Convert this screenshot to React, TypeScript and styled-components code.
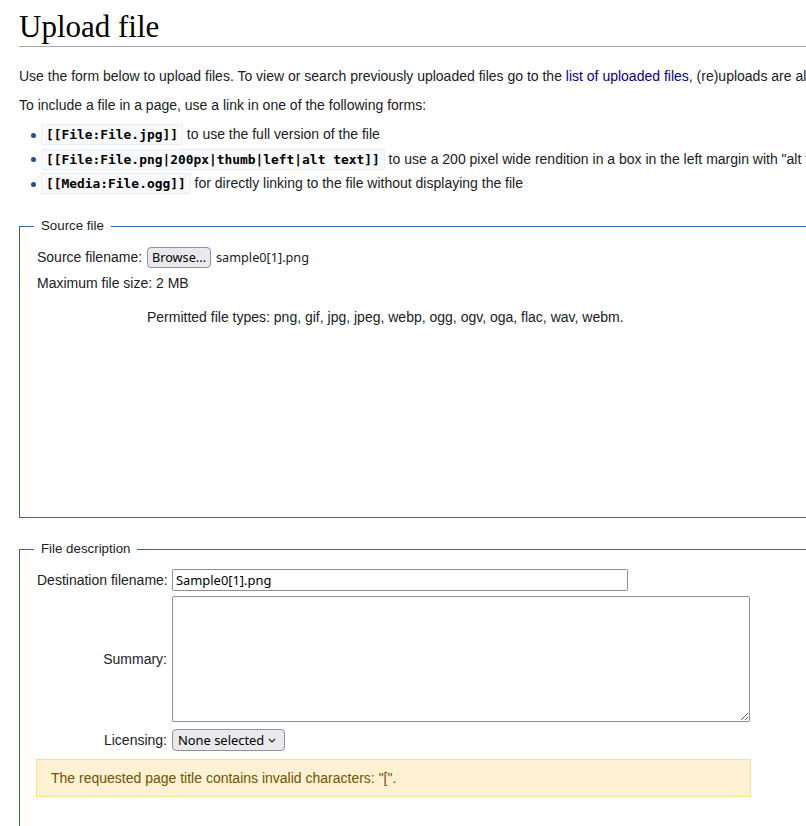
import React from "react";
import styled, { createGlobalStyle } from "styled-components";

const GlobalStyle = createGlobalStyle`
  html, body {
    margin: 0;
    overflow: hidden;
    background: #ffffff;
  }
  body {
    font-family: "Liberation Sans", Arial, sans-serif;
    font-size: 14px;
    color: #202122;
  }
`;

const Page = styled.main`
  width: 1400px;
  padding-left: 19px;
`;

const Title = styled.h1`
  margin: 7px 0 18px;
  font-family: "Liberation Serif", "Times New Roman", serif;
  font-size: 31px;
  font-weight: normal;
  line-height: 39px;
  color: #000;
  border-bottom: 1px solid #a2a9b1;
`;

const Para = styled.p`
  margin: 0 0 7px;
  line-height: 22px;
  white-space: nowrap;
`;

const Link = styled.a`
  color: #0b0080;
  text-decoration: none;
`;

const Usage = styled.ul`
  margin: 0;
  padding: 0 0 0 22px;
  list-style: none;
`;

const UsageItem = styled.li`
  height: 22px;
  line-height: 22px;
  margin-bottom: 2.5px;
  white-space: nowrap;
  &::before {
    content: "";
    display: inline-block;
    width: 5px;
    height: 5px;
    margin: 0 5px 0 -10px;
    border-radius: 50%;
    background: #2a4b8d;
    vertical-align: middle;
  }
`;

const Code = styled.code`
  font-family: "DejaVu Sans Mono", monospace;
  font-size: 12.9px;
  font-weight: bold;
  line-height: 1;
  color: #000;
  background: #f8f9fa;
  border: 1px solid #eaecf0;
  border-radius: 2px;
  padding: 2px 4px;
`;

const Fieldset = styled.fieldset<{ $mt: number }>`
  margin: ${(p) => p.$mt}px 0 0;
  padding: 0 14px;
  border: 1px solid #3366aa;
  min-width: 0;
`;

const Legend = styled.legend`
  padding: 0 7px;
  font-size: 13.3px;
  line-height: 22px;
`;

const FormBody = styled.div<{ $minH?: number; $pb?: number }>`
  padding: 8px 0 ${(p) => p.$pb ?? 0}px 2px;
  min-height: ${(p) => p.$minH ?? 0}px;
  box-sizing: border-box;
`;

const FormRow = styled.div<{ $labelW: number; $mt?: number }>`
  display: grid;
  grid-template-columns: ${(p) => p.$labelW}px 1fr;
  column-gap: 5px;
  align-items: center;
  margin-top: ${(p) => p.$mt ?? 0}px;
  line-height: 22px;
  white-space: nowrap;
`;

const Label = styled.label`
  padding-left: 1px;
  text-align: right;
`;

const Plain = styled.div<{ $mt?: number }>`
  margin-top: ${(p) => p.$mt ?? 0}px;
  padding-left: 1px;
  line-height: 22px;
  white-space: nowrap;
`;

const FileRow = styled.div`
  display: flex;
  align-items: center;
  gap: 5px;
  min-height: 24px;
`;

const BrowseButton = styled.button`
  height: 21px;
  width: 64px;
  padding: 0;
  font-family: "Noto Sans", sans-serif;
  font-size: 12.7px;
  color: #000;
  background: #e9e9ed;
  border: 1px solid #8f8f9d;
  border-radius: 4px;
`;

const FileName = styled.span`
  font-family: "Noto Sans", sans-serif;
  font-size: 12.7px;
`;

const TextInput = styled.input`
  box-sizing: border-box;
  display: block;
  width: 456px;
  height: 22px;
  padding: 0 3px;
  font-family: "Noto Sans", sans-serif;
  font-size: 12.9px;
  color: #000;
  border: 1px solid #8f8f9d;
  border-radius: 2px;
  outline: none;
`;

const SummaryBox = styled.textarea`
  box-sizing: border-box;
  display: block;
  width: 578px;
  height: 126px;
  margin: 0;
  border: 1px solid #8f8f9d;
  border-radius: 2px;
  outline: none;
`;

const SelectWrap = styled.div`
  position: relative;
  width: 113px;
  height: 22px;
`;

const Select = styled.select`
  appearance: none;
  box-sizing: border-box;
  display: block;
  width: 100%;
  height: 100%;
  padding: 0 0 0 5px;
  font-family: "Noto Sans", sans-serif;
  font-size: 12.9px;
  color: #000;
  background: #e9e9ed;
  border: 1px solid #8f8f9d;
  border-radius: 4px;
`;

const Chevron = styled.svg`
  position: absolute;
  right: 9px;
  top: 9px;
  pointer-events: none;
`;

const Warning = styled.div<{ $mt?: number; $width: number }>`
  box-sizing: border-box;
  width: ${(p) => p.$width}px;
  margin-top: ${(p) => p.$mt ?? 0}px;
  padding: 7px 14px;
  line-height: 22px;
  color: #725300;
  background: #fdf1d3;
  border: 1px solid #fbe08f;
`;

const App: React.FC = () => {
  return (
    <>
      <GlobalStyle />
      <Page>
        <Title>Upload file</Title>
        <Para>
          Use the form below to upload files. To view or search previously uploaded files go to the{" "}
          <Link href="#">list of uploaded files</Link>, (re)uploads are also logged in the{" "}
          <Link href="#">upload log</Link>, deletions in the <Link href="#">deletion log</Link>.
        </Para>
        <Para>To include a file in a page, use a link in one of the following forms:</Para>
        <Usage>
          <UsageItem>
            <Code>[[File:File.jpg]]</Code> to use the full version of the file
          </UsageItem>
          <UsageItem>
            <Code>[[File:File.png|200px|thumb|left|alt text]]</Code> to use a 200 pixel wide rendition in a box
            in the left margin with "alt text" as description
          </UsageItem>
          <UsageItem>
            <Code>[[Media:File.ogg]]</Code> for directly linking to the file without displaying the file
          </UsageItem>
        </Usage>

        <Fieldset $mt={21}>
          <Legend>Source file</Legend>
          <FormBody $minH={280}>
            <FormRow $labelW={106}>
              <Label>Source filename:</Label>
              <FileRow>
                <BrowseButton type="button">Browse...</BrowseButton>
                <FileName>sample0[1].png</FileName>
              </FileRow>
            </FormRow>
            <Plain $mt={3}>Maximum file size: 2 MB</Plain>
            <FormRow $labelW={106} $mt={12}>
              <span />
              <span>Permitted file types: png, gif, jpg, jpeg, webp, ogg, ogv, oga, flac, wav, webm.</span>
            </FormRow>
          </FormBody>
        </Fieldset>

        <Fieldset $mt={20}>
          <Legend>File description</Legend>
          <FormBody $pb={60}>
            <FormRow $labelW={131} $mt={1}>
              <Label>Destination filename:</Label>
              <TextInput defaultValue="Sample0[1].png" />
            </FormRow>
            <FormRow $labelW={131} $mt={5}>
              <Label>Summary:</Label>
              <SummaryBox />
            </FormRow>
            <FormRow $labelW={131} $mt={7}>
              <Label>Licensing:</Label>
              <SelectWrap>
                <Select defaultValue="none">
                  <option value="none">None selected</option>
                </Select>
                <Chevron width="8" height="5" viewBox="0 0 8 5">
                  <path d="M1 1l3 3 3-3" fill="none" stroke="#202122" strokeWidth="1.2" />
                </Chevron>
              </SelectWrap>
            </FormRow>
            <Warning $mt={8} $width={715}>
              The requested page title contains invalid characters: "[".
            </Warning>
          </FormBody>
        </Fieldset>
      </Page>
    </>
  );
};

export default App;
